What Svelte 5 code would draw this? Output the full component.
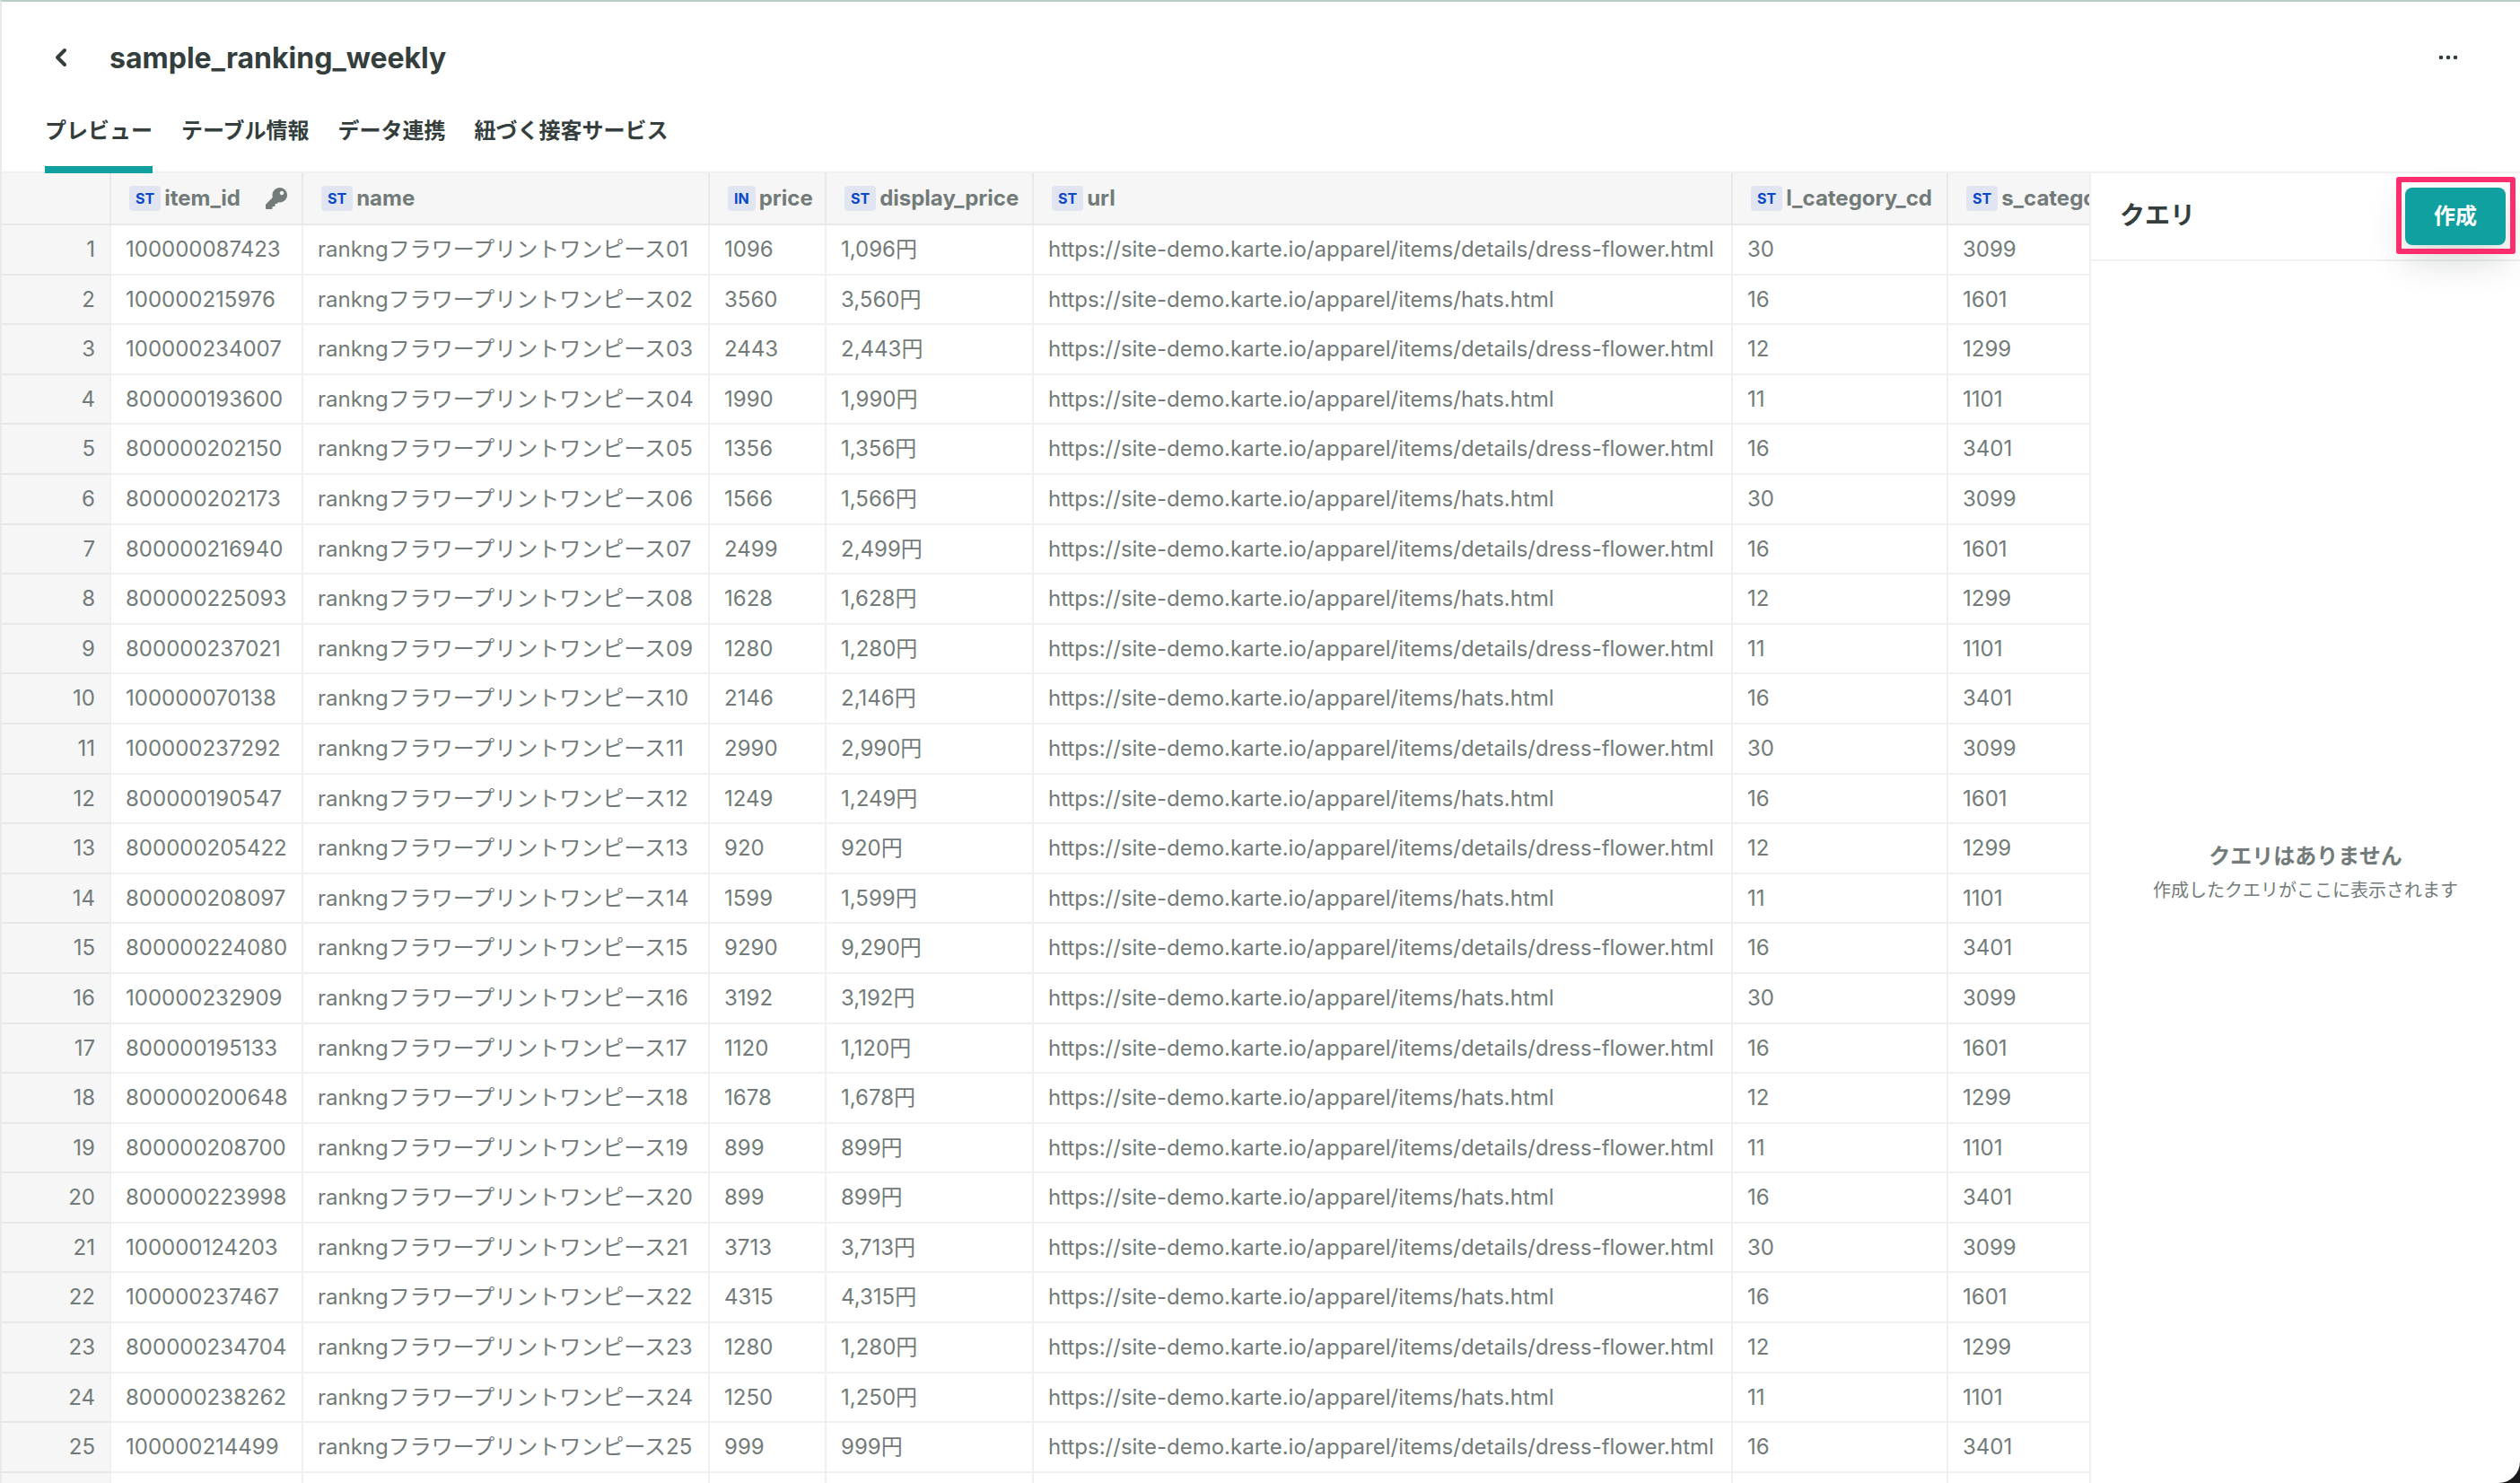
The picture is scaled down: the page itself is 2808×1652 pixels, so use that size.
<script>
  const tabs = ['プレビュー', 'テーブル情報', 'データ連携', '紐づく接客サービス'];
  let active = $state(0);

  const columns = [
    { type: 'ST', name: 'item_id', width: 214, key: true },
    { type: 'ST', name: 'name', width: 453 },
    { type: 'IN', name: 'price', width: 130 },
    { type: 'ST', name: 'display_price', width: 231 },
    { type: 'ST', name: 'url', width: 779 },
    { type: 'ST', name: 'l_category_cd', width: 240 },
    { type: 'ST', name: 's_category_cd', width: 246 }
  ];

  const items = [
    ['100000087423', 1096], ['100000215976', 3560], ['100000234007', 2443],
    ['800000193600', 1990], ['800000202150', 1356], ['800000202173', 1566],
    ['800000216940', 2499], ['800000225093', 1628], ['800000237021', 1280],
    ['100000070138', 2146], ['100000237292', 2990], ['800000190547', 1249],
    ['800000205422', 920], ['800000208097', 1599], ['800000224080', 9290],
    ['100000232909', 3192], ['800000195133', 1120], ['800000200648', 1678],
    ['800000208700', 899], ['800000223998', 899], ['100000124203', 3713],
    ['100000237467', 4315], ['800000234704', 1280], ['800000238262', 1250],
    ['100000214499', 999]
  ];
  const categories = [['30', '3099'], ['16', '1601'], ['12', '1299'], ['11', '1101'], ['16', '3401']];
  const base = 'https://site-demo.karte.io/apparel/items/';

  const rows = items.map(([id, price], i) => [
    id,
    'rankngフラワープリントワンピース' + String(i + 1).padStart(2, '0'),
    String(price),
    price.toLocaleString('en-US') + '円',
    base + (i % 2 ? 'hats.html' : 'details/dress-flower.html'),
    ...categories[i % 5]
  ]);

  const tableWidth = columns.reduce((sum, col) => sum + col.width, 122);
</script>

<div class="app">
  <header>
    <div class="titlebar">
      <button class="icon" aria-label="戻る">
        <svg width="24" height="24" viewBox="0 0 24 24"><path d="M16 4 8 12l8 8" /></svg>
      </button>
      <h1>sample_ranking_weekly</h1>
      <button class="icon more" aria-label="メニュー">
        <svg width="24" height="24" viewBox="0 0 24 24">
          <circle cx="4" cy="12" r="2.3" /><circle cx="12" cy="12" r="2.3" /><circle cx="20" cy="12" r="2.3" />
        </svg>
      </button>
    </div>
    <nav>
      {#each tabs as tab, i}
        <button class="tab" class:active={active === i} onclick={() => (active = i)}>{tab}</button>
      {/each}
    </nav>
  </header>

  <main>
    <div class="sheet">
      <table style:width="{tableWidth}px">
        <colgroup>
          <col class="index" />
          {#each columns as col}
            <col style:width="{col.width}px" />
          {/each}
        </colgroup>
        <thead>
          <tr>
            <td class="num"></td>
            {#each columns as col}
              <th scope="col">
                <div class="head">
                  <span class="type">{col.type}</span>
                  <span>{col.name}</span>
                  {#if col.key}
                    <svg class="key" width="24" height="24" viewBox="0 0 512 512" aria-hidden="true">
                      <path d="M512 176.001C512 273.203 433.202 352 336 352c-11.220 0-22.190-1.062-32.827-3.069l-24.012 27.014A23.999 23.999 0 0 1 261.223 384H224v40c0 13.255-10.745 24-24 24h-40v40c0 13.255-10.745 24-24 24H24c-13.255 0-24-10.745-24-24v-78.059c0-6.365 2.529-12.470 7.029-16.971l161.802-161.802C163.108 213.814 160 195.271 160 176 160 78.798 238.797.001 335.999 0 433.488-.001 512 78.511 512 176.001zM336 128c0 26.510 21.490 48 48 48s48-21.490 48-48-21.490-48-48-48-48 21.490-48 48z" />
                    </svg>
                  {/if}
                </div>
              </th>
            {/each}
          </tr>
        </thead>
        <tbody>
          {#each rows as row, i}
            <tr>
              <td class="num">{i + 1}</td>
              {#each row as cell}
                <td>{cell}</td>
              {/each}
            </tr>
          {/each}
          <tr class="rest">
            <td class="num"></td>
            {#each columns as _}
              <td></td>
            {/each}
          </tr>
        </tbody>
      </table>
    </div>

    <aside>
      <div class="query-head">
        <h2>クエリ</h2>
        <div class="spot">
          <button class="create">作成</button>
          <span class="mark"></span>
        </div>
      </div>
      <div class="empty">
        <strong>クエリはありません</strong>
        <p>作成したクエリがここに表示されます</p>
      </div>
    </aside>
  </main>
</div>

<style>
  :global(body) {
    background: #1a191c;
  }
  .app {
    box-sizing: border-box;
    display: flex;
    flex-direction: column;
    height: 100vh;
    overflow: hidden;
    background: #fff;
    border-top: 2px solid #b9cdcb;
    border-left: 2px solid #e8e9e9;
    border-bottom-right-radius: 24px;
    color: #333e3d;
    font-family: Inter, 'Noto Sans CJK JP', sans-serif;
    font-size: 24px;
    line-height: 1.4;
  }
  button {
    margin: 0;
    padding: 0;
    border: 0;
    background: none;
    color: inherit;
    font: inherit;
    cursor: pointer;
  }
  header {
    border-bottom: 2px solid #f0f0f0;
  }
  .titlebar {
    display: flex;
    align-items: center;
    height: 124px;
    padding: 0 68px 0 54px;
  }
  .icon {
    display: flex;
  }
  .icon path {
    fill: none;
    stroke: #333e3d;
    stroke-width: 4;
    stroke-linecap: round;
    stroke-linejoin: round;
  }
  .icon circle {
    fill: #333e3d;
  }
  .more {
    margin-left: auto;
  }
  h1 {
    margin: 0 0 0 42px;
    padding-top: 2px;
    font-size: 32px;
    font-weight: 700;
    line-height: 46px;
  }
  nav {
    display: flex;
    gap: 32px;
    height: 65px;
    padding-left: 48px;
  }
  .tab {
    height: 67px;
    padding-bottom: 20px;
    border-bottom: 8px solid transparent;
    box-sizing: border-box;
    font-weight: 700;
    white-space: nowrap;
  }
  .tab.active {
    border-color: #10a09f;
  }
  main {
    display: flex;
    flex: 1;
    min-height: 0;
  }
  .sheet {
    flex: 1;
    min-width: 0;
    overflow: hidden;
  }
  table {
    table-layout: fixed;
    border-collapse: separate;
    border-spacing: 0;
    color: #727b79;
  }
  .index {
    width: 122px;
  }
  th,
  td {
    padding: 10px 16px;
    border-right: 2px solid #f0f0f0;
    border-bottom: 2px solid #f0f0f0;
    text-align: left;
    white-space: nowrap;
  }
  thead th,
  thead td {
    background: #f6f6f6;
    border-color: #e8e8e8;
    font-weight: 700;
  }
  .num {
    background: #f6f6f6;
    border-bottom-color: #e8e8e8;
    text-align: right;
  }
  .rest td {
    height: 34px;
  }
  .head {
    display: flex;
    align-items: center;
    height: 36px;
  }
  .type {
    margin: 0 4px;
    padding: 0 7px;
    border-radius: 4px;
    background: #e1e5f2;
    color: #0a48c8;
    font-size: 16px;
    line-height: 28px;
  }
  .key {
    margin-left: auto;
    fill: #727b79;
  }
  aside {
    display: flex;
    flex-direction: column;
    flex: none;
    width: 478px;
    border-left: 2px solid #f0f0f0;
  }
  .query-head {
    display: flex;
    align-items: center;
    justify-content: space-between;
    height: 96px;
    padding: 0 16px 0 32px;
    border-bottom: 2px solid #f0f0f0;
  }
  h2 {
    margin: 0;
    font-size: 28px;
    font-weight: 700;
  }
  .spot {
    position: relative;
  }
  .create {
    display: block;
    width: 112px;
    height: 64px;
    border-radius: 8px;
    background: #10a09f;
    box-shadow: 0 16px 40px rgba(38, 50, 49, 0.2);
    color: #fff;
    font-weight: 700;
  }
  .mark {
    position: absolute;
    inset: -12px -11px -10px -10px;
    border: 6px solid #ff2d6c;
    border-radius: 3px;
    pointer-events: none;
  }
  .empty {
    display: flex;
    flex: 1;
    flex-direction: column;
    align-items: center;
    justify-content: center;
    color: #727b79;
  }
  .empty strong {
    line-height: 40px;
  }
  .empty p {
    margin: 0;
    font-size: 20px;
    line-height: 36px;
  }
</style>
